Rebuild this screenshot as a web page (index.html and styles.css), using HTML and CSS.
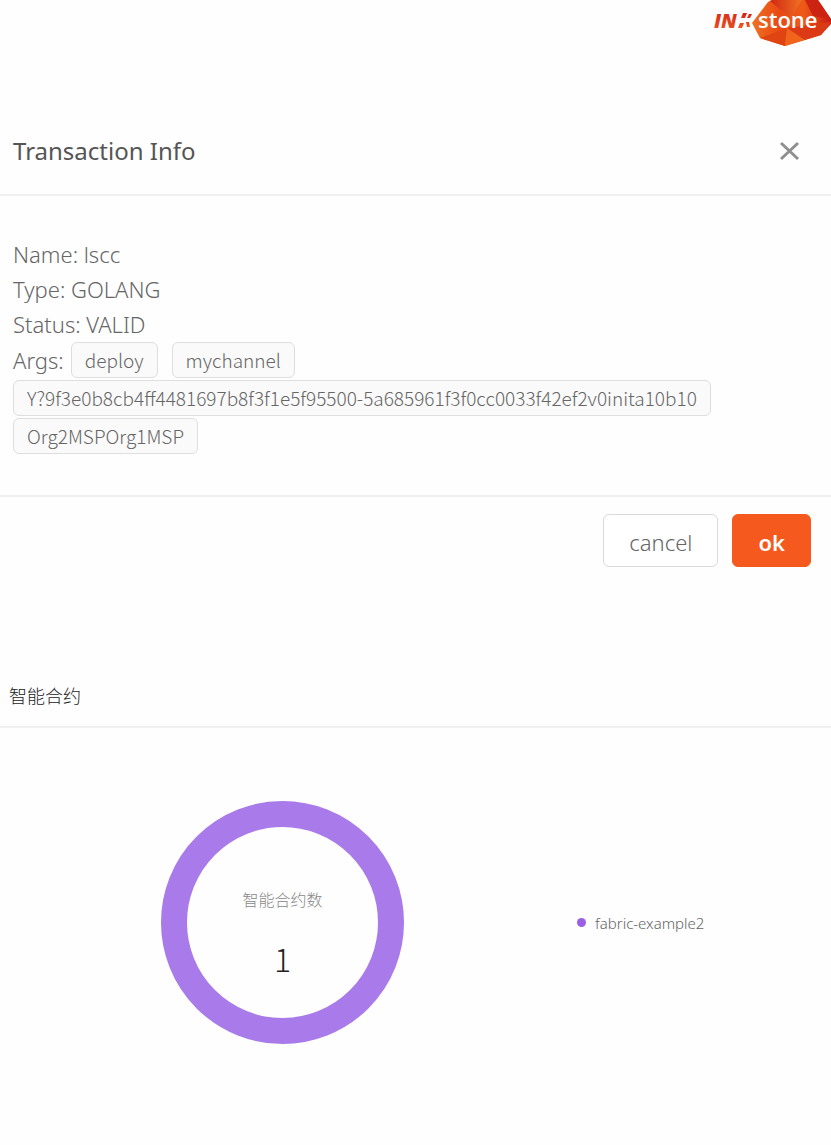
FILE: index.html
```html
<!DOCTYPE html>
<html lang="zh-CN">
<head>
  <meta charset="UTF-8" />
  <meta name="viewport" content="width=device-width, initial-scale=1.0" />
  <title>Transaction Info</title>
  <link rel="stylesheet" href="styles.css">
</head>
<body>
  <header class="topbar">
    <a class="logo" href="#" aria-label="INK stone">
      <svg width="118" height="48" viewBox="0 0 118 48">
        <defs>
          <linearGradient id="gem" x1="0" y1="0" x2="1" y2="0">
            <stop offset="0" stop-color="#f07020" />
            <stop offset="0.35" stop-color="#e84a14" />
            <stop offset="0.65" stop-color="#ee5a18" />
            <stop offset="1" stop-color="#c91d14" />
          </linearGradient>
          <linearGradient id="top" x1="0" y1="0" x2="1" y2="0">
            <stop offset="0" stop-color="#d02812" />
            <stop offset="1" stop-color="#f07024" />
          </linearGradient>
          <linearGradient id="ink" x1="0" y1="0" x2="0" y2="1">
            <stop offset="0" stop-color="#d5201a" />
            <stop offset="1" stop-color="#ee5a1c" />
          </linearGradient>
        </defs>
        <path d="M39 23 L55 2 L59 0 H105 L118 19 V24 L108 35 L72 46 L47 38 Z" fill="url(#gem)" />
        <path d="M57 1 L59 0 H89 L78 18 Z" fill="url(#top)" />
        <path d="M92 0 H105 L118 19 L100 16 Z" fill="#cc2412" />
        <path d="M47 38 L74 28 L72 46 Z" fill="#e04413" />
        <path d="M74 28 L72 46 L92 40 Z" fill="#f0641c" />
        <path d="M92 40 L74 28 L118 22 L108 35 Z" fill="#dc3a14" />
        <text class="logo-ink" x="1" y="28" fill="url(#ink)">IN</text>
        <path d="M30 13 h4 l-2 5 h-4 Z M27 23 h4 l-2 5 h-4 Z M36 14 h3 l-2 4 h-3 Z M33 22 h3 l1 5 h-3 Z" fill="url(#ink)" />
        <text class="logo-stone" x="45" y="28">stone</text>
      </svg>
    </a>
  </header>

  <section class="modal" role="dialog" aria-labelledby="modal-title">
    <div class="modal-header">
      <h2 id="modal-title">Transaction Info</h2>
      <button class="close-btn" type="button" aria-label="Close">
        <svg width="20" height="20" viewBox="0 0 20 20">
          <path d="M1 2 L18 18 M18 2 L1 18" fill="none" stroke="#8f8f8f" stroke-width="3" />
        </svg>
      </button>
    </div>
    <div class="modal-body">
      <p>Name: lscc</p>
      <p>Type: GOLANG</p>
      <p>Status: VALID</p>
      <div class="args">
        <span class="args-label">Args:</span>
        <span class="tag">deploy</span>
        <span class="tag">mychannel</span>
        <span class="tag">Y?9f3e0b8cb4ff4481697b8f3f1e5f95500-5a685961f3f0cc0033f42ef2v0inita10b10</span>
        <span class="tag">Org2MSPOrg1MSP</span>
      </div>
    </div>
    <div class="modal-footer">
      <button class="btn" type="button">cancel</button>
      <button class="btn btn-primary" type="button">ok</button>
    </div>
  </section>

  <section class="card">
    <h3>智能合约</h3>
    <div class="chart">
      <div class="donut">
        <span class="donut-label">智能合约数</span>
        <span class="donut-value">1</span>
      </div>
      <div class="legend"><i class="dot"></i>fabric-example2</div>
    </div>
  </section>
</body>
</html>
```

FILE: styles.css
```css
* {
  box-sizing: border-box;
}
body {
  margin: 0;
  font-family: "Noto Sans", "Noto Sans CJK SC", sans-serif;
  font-weight: 300;
  color: #666;
  background: #fefefe;
}
h2, h3, p {
  margin: 0;
}
button {
  font-family: inherit;
  cursor: pointer;
}
.topbar {
  display: flex;
  justify-content: flex-end;
  height: 108px;
}
.logo svg {
  display: block;
}
.logo-ink {
  font-family: "Open Sans", sans-serif;
  font-size: 20px;
  font-weight: 800;
  font-style: italic;
}
.logo-stone {
  font-family: "Open Sans", sans-serif;
  font-size: 22px;
  font-weight: 600;
  fill: #fff;
}
.modal-header {
  display: flex;
  align-items: center;
  justify-content: space-between;
  height: 88px;
  padding: 0 31px 0 13px;
  border-bottom: 2px solid #efefef;
}
.modal-header h2 {
  font-size: 24px;
  font-weight: 400;
  line-height: 32px;
  color: #555;
}
.close-btn {
  display: flex;
  padding: 0;
  border: none;
  background: none;
}
.modal-body {
  padding: 41px 13px;
  font-size: 22px;
  line-height: 35px;
}
.args {
  display: flex;
  flex-wrap: wrap;
  align-items: center;
  row-gap: 2px;
}
.args-label {
  margin-right: 7px;
}
.tag {
  height: 36px;
  margin-right: 14px;
  padding: 0 13px;
  font-family: "Noto Sans CJK SC", sans-serif;
  font-size: 19px;
  line-height: 34px;
  background: #fafafa;
  border: 1px solid #dedede;
  border-radius: 6px;
}
.modal-footer {
  display: flex;
  justify-content: flex-end;
  gap: 14px;
  padding: 17px 20px;
  border-top: 2px solid #efefef;
}
.btn {
  height: 53px;
  padding: 2px 25px 0;
  font-size: 22px;
  font-weight: 300;
  color: #666;
  background: #fff;
  border: 1px solid #d9d9d9;
  border-radius: 6px;
}
.btn-primary {
  font-weight: 600;
  color: #fff;
  background: #f5591d;
  border-color: #f5591d;
}
.card {
  margin-top: 82px;
}
.card h3 {
  padding: 16px 9px;
  font-size: 18px;
  font-weight: 300;
  line-height: 28px;
  color: #222;
  border-bottom: 2px solid #f1f1f1;
}
.chart {
  display: grid;
  grid-template-columns: 68% 1fr;
  align-items: center;
  padding: 73px 0 100px;
}
.donut {
  display: flex;
  flex-direction: column;
  align-items: center;
  justify-content: center;
  gap: 24px;
  width: 243px;
  height: 243px;
  margin: 0 auto;
  padding-top: 22px;
  border: 26px solid #a87aea;
  border-radius: 50%;
}
.donut-label {
  font-size: 16px;
  line-height: 24px;
  color: #888;
}
.donut-value {
  font-family: "Noto Sans CJK SC", sans-serif;
  font-size: 32px;
  line-height: 44px;
  color: #222;
}
.legend {
  display: flex;
  align-items: center;
  gap: 9px;
  padding-left: 12px;
  font-size: 15px;
}
.dot {
  width: 9px;
  height: 9px;
  border-radius: 50%;
  background: #9a5fe6;
}
```
